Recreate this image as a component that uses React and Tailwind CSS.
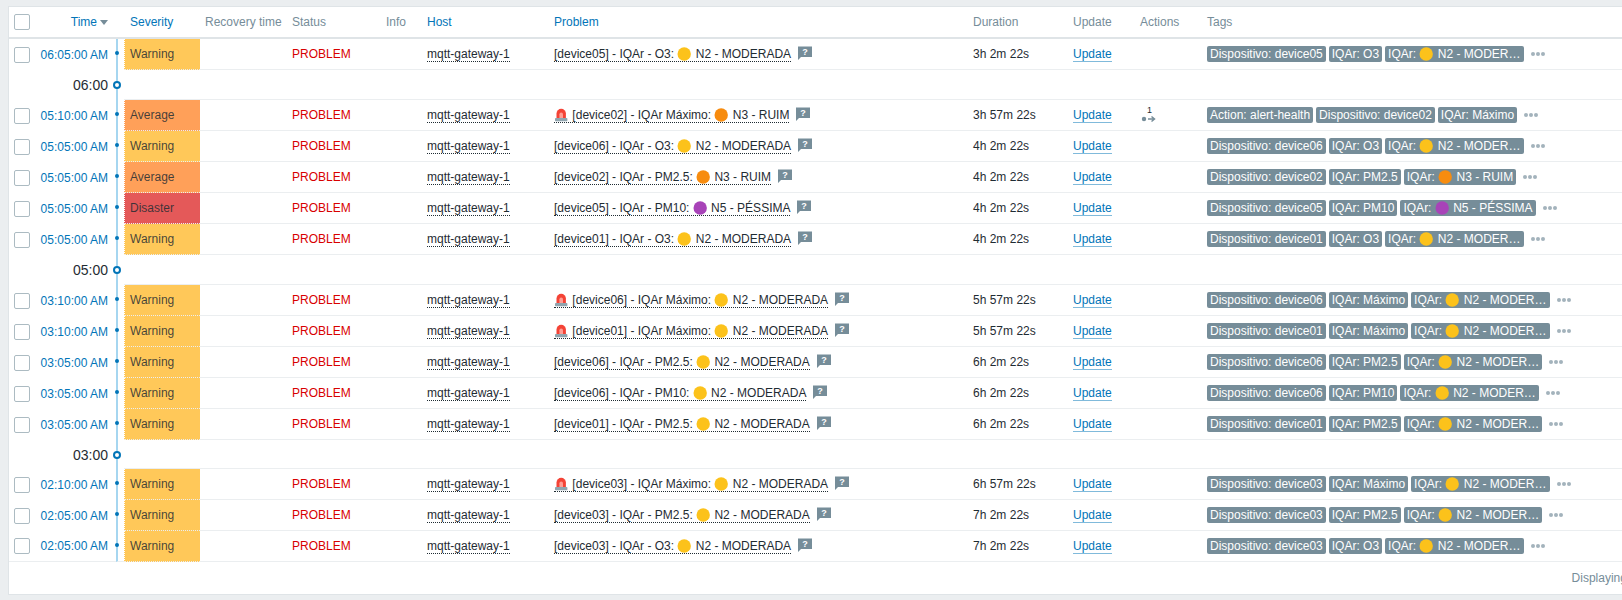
const YELLOW = '#fcc21b';
const ORANGE = '#f78c0f';
const PURPLE = '#a843b8';

const levels = {
  N2: { label: 'N2 - MODERADA', color: YELLOW, severity: 'Warning', bg: 'bg-[#ffc859]' },
  N3: { label: 'N3 - RUIM', color: ORANGE, severity: 'Average', bg: 'bg-[#ffa059]' },
  N5: { label: 'N5 - PÉSSIMA', color: PURPLE, severity: 'Disaster', bg: 'bg-[#e45959]' },
};

const rows = [
  { time: '06:05:00 AM', device: 'device05', metric: 'O3', level: 'N2', duration: '3h 2m 22s' },
  { divider: '06:00', height: 'h-[30px]' },
  { time: '05:10:00 AM', device: 'device02', metric: 'Máximo', level: 'N3', duration: '3h 57m 22s', action: true },
  { time: '05:05:00 AM', device: 'device06', metric: 'O3', level: 'N2', duration: '4h 2m 22s' },
  { time: '05:05:00 AM', device: 'device02', metric: 'PM2.5', level: 'N3', duration: '4h 2m 22s' },
  { time: '05:05:00 AM', device: 'device05', metric: 'PM10', level: 'N5', duration: '4h 2m 22s' },
  { time: '05:05:00 AM', device: 'device01', metric: 'O3', level: 'N2', duration: '4h 2m 22s' },
  { divider: '05:00', height: 'h-[30px]' },
  { time: '03:10:00 AM', device: 'device06', metric: 'Máximo', level: 'N2', duration: '5h 57m 22s' },
  { time: '03:10:00 AM', device: 'device01', metric: 'Máximo', level: 'N2', duration: '5h 57m 22s' },
  { time: '03:05:00 AM', device: 'device06', metric: 'PM2.5', level: 'N2', duration: '6h 2m 22s' },
  { time: '03:05:00 AM', device: 'device06', metric: 'PM10', level: 'N2', duration: '6h 2m 22s' },
  { time: '03:05:00 AM', device: 'device01', metric: 'PM2.5', level: 'N2', duration: '6h 2m 22s' },
  { divider: '03:00', height: 'h-[29px]' },
  { time: '02:10:00 AM', device: 'device03', metric: 'Máximo', level: 'N2', duration: '6h 57m 22s' },
  { time: '02:05:00 AM', device: 'device03', metric: 'PM2.5', level: 'N2', duration: '7h 2m 22s' },
  { time: '02:05:00 AM', device: 'device03', metric: 'O3', level: 'N2', duration: '7h 2m 22s' },
];

function Dot({ color }) {
  return (
    <svg className="inline-block align-[-3px] w-[15px] h-[14px]" viewBox="0 0 15 14">
      <circle cx="7.2" cy="7" r="6.7" fill={color} />
    </svg>
  );
}

function Siren() {
  return (
    <svg className="inline-block align-[-3px] w-[15px] h-[14px]" viewBox="0 0 15 14">
      <path d="M2.5 10V5.5a4.7 4.7 0 0 1 9.4 0V10z" fill="#f44336" />
      <path d="M5.4 10V6.2a1.8 1.8 0 0 1 3.6 0V10z" fill="#ff9d94" />
      <rect x="1" y="10" width="12.4" height="3.2" rx="0.8" fill="#90a4ae" />
    </svg>
  );
}

function Checkbox() {
  return <span className="block w-4 h-4 bg-white border border-[#acbbc2] rounded-[2px]" />;
}

function Hint() {
  return (
    <svg className="shrink-0 ml-[6px] -mt-[3px] w-[15px] h-[14px]" viewBox="0 0 15 14">
      <path d="M1 0.5H15V11H4L1 14z" fill="#768d99" />
      <text x="8" y="8.5" textAnchor="middle" fontSize="9" fontWeight="700" fill="#fff" fontFamily="Liberation Sans">?</text>
    </svg>
  );
}

function ActionIcon() {
  return (
    <span className="relative block w-[16px] h-[16px] ml-[1px]">
      <span className="absolute left-[6px] -top-[2px] text-[9px] leading-[10px] text-[#1f2c33]">1</span>
      <svg className="absolute left-0 bottom-0 w-[16px] h-[8px]" viewBox="0 0 16 8">
        <circle cx="3" cy="4" r="2.2" fill="#768d99" />
        <path d="M7 4H13M10.5 1.5L13.5 4L10.5 6.5" stroke="#768d99" strokeWidth="1.5" fill="none" />
      </svg>
    </span>
  );
}

function Tag({ children }) {
  return (
    <span className="block shrink-0 max-w-[138.4px] h-4 leading-4 px-[3px] rounded-[2px] bg-[#768d99] text-white truncate">
      {children}
    </span>
  );
}

function Row({ row, last }) {
  const level = levels[row.level];
  const siren = row.metric === 'Máximo';
  const bottom = 'border-b border-[#ebeef0]';
  return (
    <tr className="h-[31px]">
      <td className={`pl-[5px] ${last ? bottom : ''}`}><Checkbox /></td>
      <td className={`pr-[8px] text-right text-[#0275b8] ${last ? bottom : ''}`}>{row.time}</td>
      <td className={`relative border-l-2 border-l-[#a6d6f0] ${last ? bottom : ''}`}>
        <span className="absolute -left-[3px] top-[12px] w-[4px] h-[4px] rounded-full bg-[#0275b8]" />
      </td>
      <td className={`pl-[5px] text-[#1f2c33]/85 ${level.bg} border-l border-dotted border-l-white ${bottom}`}>{level.severity}</td>
      <td className={bottom} />
      <td className={`pl-[5px] text-[#d80000] ${bottom}`}>PROBLEM</td>
      <td className={bottom} />
      <td className={`pl-[5px] ${bottom}`}>
        <span className="border-b border-dotted border-[#1f2c33]">mqtt-gateway-1</span>
      </td>
      <td className={`pl-[5px] ${bottom}`}>
        <div className="flex items-center">
          <span className="border-b border-dotted border-[#1f2c33]">
            {siren && <><Siren /> </>}
            [{row.device}] - {siren ? 'IQAr Máximo' : `IQAr - ${row.metric}`}: <Dot color={level.color} /> {level.label}
          </span>
          <Hint />
        </div>
      </td>
      <td className={`pl-[5px] ${bottom}`}>{row.duration}</td>
      <td className={`pl-[5px] ${bottom}`}>
        <span className="text-[#0275b8] border-b border-[#0275b8]/50">Update</span>
      </td>
      <td className={`pl-[5px] ${bottom}`}>{row.action && <ActionIcon />}</td>
      <td className={`pl-[5px] ${bottom}`}>
        <div className="flex items-center gap-[3px]">
          {row.action && <Tag>Action: alert-health</Tag>}
          <Tag>Dispositivo: {row.device}</Tag>
          <Tag>IQAr: {row.metric}</Tag>
          {!row.action && <Tag>IQAr: <Dot color={level.color} /> {level.label}</Tag>}
          <span className="flex gap-[1px] ml-[4px]">
            <i className="w-[4px] h-[4px] rounded-full bg-[#a3b3bc]" />
            <i className="w-[4px] h-[4px] rounded-full bg-[#a3b3bc]" />
            <i className="w-[4px] h-[4px] rounded-full bg-[#a3b3bc]" />
          </span>
        </div>
      </td>
    </tr>
  );
}

function DividerRow({ row }) {
  return (
    <tr className={row.height}>
      <td />
      <td className="pr-[8px] text-right text-[14px] text-[#1f2c33]">{row.divider}</td>
      <td className="relative border-l-2 border-l-[#a6d6f0]">
        <span className="absolute -left-[5px] top-[11px] w-[8px] h-[8px] rounded-full bg-white border-2 border-[#0275b8]" />
      </td>
      <td colSpan={10} className="border-b border-[#ebeef0]" />
    </tr>
  );
}

export default function App() {
  return (
    <div className="h-[600px] overflow-hidden bg-[#ebeef0] pt-[6px] pl-[8px] text-[12px] leading-[14px] text-[#1f2c33] font-['Liberation_Sans',Arial,sans-serif]">
      <div className="w-[1708px] bg-white border border-[#dfe4e7]">
        <table className="w-[1706px] table-fixed border-separate border-spacing-0">
          <colgroup>
            <col className="w-[27px]" />
            <col className="w-[80px]" />
            <col className="w-[8px]" />
            <col className="w-[76px]" />
            <col className="w-[87px]" />
            <col className="w-[94px]" />
            <col className="w-[41px]" />
            <col className="w-[127px]" />
            <col className="w-[419px]" />
            <col className="w-[100px]" />
            <col className="w-[67px]" />
            <col className="w-[67px]" />
            <col />
          </colgroup>
          <thead>
            <tr className="h-[32px] [&>th]:border-b-2 [&>th]:border-[#dfe4e7] [&>th]:font-normal [&>th]:text-left [&>th]:text-[#768d99]">
              <th className="pl-[5px]"><Checkbox /></th>
              <th colSpan={2} className="pr-[16px]">
                <span className="flex items-center justify-end gap-[3px] text-[#0275b8]">
                  Time
                  <svg className="w-[8px] h-[5px]" viewBox="0 0 8 5"><path d="M0 0H8L4 5z" fill="#768d99" /></svg>
                </span>
              </th>
              <th className="pl-[6px]"><span className="text-[#0275b8]">Severity</span></th>
              <th className="pl-[5px]">Recovery time</th>
              <th className="pl-[5px]">Status</th>
              <th className="pl-[5px]">Info</th>
              <th className="pl-[5px]"><span className="text-[#0275b8]">Host</span></th>
              <th className="pl-[5px]"><span className="text-[#0275b8]">Problem</span></th>
              <th className="pl-[5px]">Duration</th>
              <th className="pl-[5px]">Update</th>
              <th className="pl-[5px]">Actions</th>
              <th className="pl-[5px]">Tags</th>
            </tr>
          </thead>
          <tbody>
            {rows.map((row, i) =>
              row.divider
                ? <DividerRow key={i} row={row} />
                : <Row key={i} row={row} last={i === rows.length - 1} />
            )}
          </tbody>
        </table>
        <div className="h-[32px] pr-[8px] flex items-center justify-end text-[#768d99]">
          Displaying 14 of 14 found
        </div>
      </div>
    </div>
  );
}
